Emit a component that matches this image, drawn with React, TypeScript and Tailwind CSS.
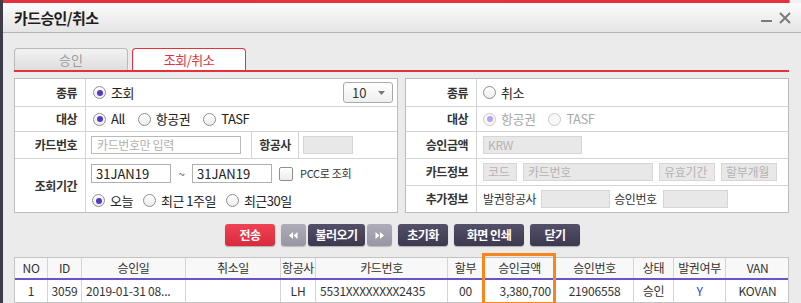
import React from "react";

const FONT = { fontFamily: "'Noto Sans CJK KR', 'Noto Sans', sans-serif" };

function Radio({ checked = false, disabled = false }: { checked?: boolean; disabled?: boolean }) {
  return (
    <span
      className={`inline-flex items-center justify-center w-[13px] h-[13px] rounded-full border ${
        disabled ? "border-[#c9c9c9] bg-[#f7f7f7]" : "border-[#8f8f8f] bg-gradient-to-b from-white to-[#ececec]"
      } shrink-0`}
    >
      {checked && (
        <span className={`w-[6px] h-[6px] rounded-full ${disabled ? "bg-[#b7a3ea]" : "bg-[#5637c9]"}`} />
      )}
    </span>
  );
}

function RadioItem({ label, checked, disabled }: { label: string; checked?: boolean; disabled?: boolean }) {
  return (
    <span className="inline-flex items-center gap-[5px]">
      <Radio checked={checked} disabled={disabled} />
      <span className={`text-[13px] tracking-[-0.5px] ${disabled ? "text-[#a9a9a9]" : "text-[#222]"}`}>{label}</span>
    </span>
  );
}

function Label({ children, w = "w-[71px]" }: { children: React.ReactNode; w?: string }) {
  return (
    <div className={`${w} shrink-0 border-r border-[#d4d4d4] flex items-center justify-end pr-[8px] text-[12px] font-bold text-[#333] tracking-[-0.5px]`}>
      {children}
    </div>
  );
}

function DisBox({ w, text }: { w: string; text?: string }) {
  return (
    <div className={`${w} h-[18px] border border-[#d6d6d6] bg-[#e8e8e8] flex items-center px-[4px] text-[12px] text-[#b3b3b3] tracking-[-0.3px]`}>
      {text}
    </div>
  );
}

function DarkBtn({ children, w }: { children: React.ReactNode; w: string }) {
  return (
    <button className={`${w} h-[22px] rounded-[3px] bg-gradient-to-b from-[#55506a] to-[#3d3850] text-white text-[12px] font-bold tracking-[-0.5px] flex items-center justify-center shadow-[0_1px_1px_rgba(0,0,0,0.25)]`}>
      {children}
    </button>
  );
}

function ArrowBtn({ dir }: { dir: "l" | "r" }) {
  return (
    <button className="w-[25px] h-[22px] rounded-[3px] bg-gradient-to-b from-[#aeacb8] to-[#9896a4] flex items-center justify-center shadow-[0_1px_1px_rgba(0,0,0,0.2)]">
      <svg width="9" height="7" viewBox="0 0 9 7">
        {dir === "l" ? (
          <g fill="#fff">
            <polygon points="4,0 4,7 0,3.5" />
            <polygon points="8.5,0 8.5,7 4.5,3.5" />
          </g>
        ) : (
          <g fill="#fff">
            <polygon points="0.5,0 0.5,7 4.5,3.5" />
            <polygon points="5,0 5,7 9,3.5" />
          </g>
        )}
      </svg>
    </button>
  );
}

const cols = [
  { h: "NO", w: 33, v: "1", a: "center" },
  { h: "ID", w: 34, v: "3059", a: "center" },
  { h: "승인일", w: 104, v: "2019-01-31 08...", a: "left" },
  { h: "취소일", w: 95, v: "", a: "left" },
  { h: "항공사", w: 35, v: "LH", a: "center" },
  { h: "카드번호", w: 132, v: "5531XXXXXXXX2435", a: "left" },
  { h: "할부", w: 36, v: "00", a: "center" },
  { h: "승인금액", w: 72, v: "3,380,700", a: "right" },
  { h: "승인번호", w: 78, v: "21906558", a: "center" },
  { h: "상태", w: 40, v: "승인", a: "center" },
  { h: "발권여부", w: 52, v: "Y", a: "center" },
  { h: "VAN", w: 63, v: "KOVAN", a: "center" },
];

export default function App() {
  return (
    <div style={FONT} className="w-[801px] h-[303px] overflow-hidden flex bg-[#ebebeb] text-[#222]">
      <div className="w-[3px] shrink-0 bg-[#3e3c4b]" />
      <div className="flex-1 flex flex-col min-w-0">
        {/* top red line */}
        <div className="h-[3px] flex">
          <div className="w-[786px] bg-[#e3313d]" />
          <div className="w-[1px] bg-[#9a9a9a]" />
          <div className="flex-1 bg-[#f0f0f0]" />
        </div>
        {/* title bar */}
        <div className="h-[30px] shrink-0 bg-gradient-to-b from-[#fbfbfb] to-[#e5e5e5] border-b border-[#b3b3b3] flex items-center pl-[11px] pr-[10px]">
          <div className="text-[15px] font-bold text-[#1e1e1e] tracking-[-0.6px] leading-none">카드승인/취소</div>
          <div className="ml-auto flex items-center gap-[7px] mt-[1px]">
            <svg width="11" height="12" viewBox="0 0 11 12">
              <rect x="0" y="8" width="11" height="2" fill="#7b7b7b" />
            </svg>
            <svg width="12" height="12" viewBox="0 0 12 12">
              <path d="M1 1 L11 11 M11 1 L1 11" stroke="#7b7b7b" strokeWidth="2" />
            </svg>
          </div>
        </div>

        {/* body */}
        <div className="pl-[11px] pr-[12px] pt-[15px]">
          {/* tabs */}
          <div className="flex gap-[4px] h-[22px] items-end">
            <div className="w-[114px] h-[22px] rounded-t-[4px] border border-b-0 border-[#b9b9b9] bg-gradient-to-b from-[#f2f2f2] to-[#dedede] flex items-center justify-center text-[13px] text-[#9d9d9d]">
              승인
            </div>
            <div className="w-[114px] h-[22px] rounded-t-[4px] border border-b-0 border-[#e3313d] bg-white flex items-center justify-center text-[13px] text-[#e3313d] tracking-[-0.5px]">
              조회/취소
            </div>
          </div>
          <div className="h-[2px] bg-[#e3313d]" />

          {/* panels */}
          <div className="mt-[6px] flex gap-[7px]">
            {/* left panel */}
            <div className="w-[384px] h-[135px] border border-[#bcbcbc] bg-white flex flex-col">
              <div className="h-[28px] flex border-b border-[#d4d4d4]">
                <Label>종류</Label>
                <div className="flex-1 flex items-center pl-[7px] pr-[4px]">
                  <RadioItem label="조회" checked />
                  <div className="ml-auto w-[50px] h-[21px] rounded-[3px] border border-[#a9a9a9] bg-gradient-to-b from-white to-[#efefef] flex items-center pl-[8px] pr-[7px] text-[13px] text-[#333]">
                    10
                    <svg className="ml-auto" width="7" height="4" viewBox="0 0 7 4">
                      <polygon points="0,0 7,0 3.5,4" fill="#777" />
                    </svg>
                  </div>
                </div>
              </div>
              <div className="h-[25px] flex border-b border-[#d4d4d4]">
                <Label>대상</Label>
                <div className="flex-1 flex items-center pl-[7px] gap-[13px]">
                  <RadioItem label="All" checked />
                  <RadioItem label="항공권" />
                  <RadioItem label="TASF" />
                </div>
              </div>
              <div className="h-[27px] flex border-b border-[#d4d4d4]">
                <Label>카드번호</Label>
                <div className="w-[166px] border-r border-[#d4d4d4] flex items-center pl-[5px]">
                  <div className="w-[150px] h-[18px] border border-[#b9b9b9] bg-white flex items-center px-[5px] text-[12px] text-[#b0b0b0] tracking-[-0.4px]">
                    카드번호만 입력
                  </div>
                </div>
                <div className="w-[47px] border-r border-[#d4d4d4] flex items-center justify-center text-[12px] font-bold text-[#333] tracking-[-0.5px]">
                  항공사
                </div>
                <div className="flex-1 flex items-center pl-[4px]">
                  <div className="w-[50px] h-[18px] border border-[#d6d6d6] bg-[#e8e8e8]" />
                </div>
              </div>
              <div className="flex-1 flex">
                <Label>조회기간</Label>
                <div className="flex-1 flex flex-col pl-[5px] pt-[5px]">
                  <div className="flex items-center h-[19px]">
                    <div className="w-[80px] h-[19px] border border-[#b0b0b0] bg-white flex items-center px-[4px] text-[13px] text-[#222]">31JAN19</div>
                    <span className="w-[21px] text-center text-[12px] text-[#555]">~</span>
                    <div className="w-[80px] h-[19px] border border-[#b0b0b0] bg-white flex items-center px-[4px] text-[13px] text-[#222]">31JAN19</div>
                    <span className="ml-[7px] w-[14px] h-[14px] rounded-[2px] border border-[#8f8f8f] bg-gradient-to-b from-white to-[#ececec]" />
                    <span className="ml-[7px] text-[11px] text-[#333] tracking-[-0.3px]">PCC로 조회</span>
                  </div>
                  <div className="flex items-center gap-[10px] mt-[8px] pl-[1px]">
                    <RadioItem label="오늘" checked />
                    <RadioItem label="최근 1주일" />
                    <RadioItem label="최근30일" />
                  </div>
                </div>
              </div>
            </div>

            {/* right panel */}
            <div className="w-[384px] h-[135px] border border-[#bcbcbc] bg-white flex flex-col">
              <div className="h-[28px] flex border-b border-[#d4d4d4]">
                <Label>종류</Label>
                <div className="flex-1 flex items-center pl-[6px]">
                  <RadioItem label="취소" />
                </div>
              </div>
              <div className="h-[25px] flex border-b border-[#d4d4d4]">
                <Label>대상</Label>
                <div className="flex-1 flex items-center pl-[6px] gap-[13px]">
                  <RadioItem label="항공권" checked disabled />
                  <RadioItem label="TASF" disabled />
                </div>
              </div>
              <div className="h-[27px] flex border-b border-[#d4d4d4]">
                <Label>승인금액</Label>
                <div className="flex-1 flex items-center pl-[6px]">
                  <DisBox w="w-[99px]" text="KRW" />
                </div>
              </div>
              <div className="h-[27px] flex border-b border-[#d4d4d4]">
                <Label>카드정보</Label>
                <div className="flex-1 flex items-center pl-[6px] gap-[6px]">
                  <DisBox w="w-[34px]" text="코드" />
                  <DisBox w="w-[130px]" text="카드번호" />
                  <DisBox w="w-[56px]" text="유효기간" />
                  <DisBox w="w-[56px]" text="할부개월" />
                </div>
              </div>
              <div className="flex-1 flex">
                <Label>추가정보</Label>
                <div className="flex-1 flex items-center pl-[6px] text-[12px] text-[#333] tracking-[-0.4px]">
                  <span>발권항공사</span>
                  <div className="ml-[5px] w-[69px] h-[18px] border border-[#d6d6d6] bg-[#e8e8e8]" />
                  <span className="ml-[4px]">승인번호</span>
                  <div className="ml-[6px] w-[65px] h-[18px] border border-[#d6d6d6] bg-[#e8e8e8]" />
                </div>
              </div>
            </div>
          </div>

          {/* buttons */}
          <div className="mt-[11px] flex items-center pl-[211px]">
            <button className="w-[50px] h-[22px] rounded-[3px] bg-gradient-to-b from-[#ef4355] to-[#d82a3c] text-white text-[12px] font-bold tracking-[-0.5px] flex items-center justify-center shadow-[0_1px_1px_rgba(0,0,0,0.25)]">
              전송
            </button>
            <div className="ml-[6px] flex gap-[2px]">
              <ArrowBtn dir="l" />
              <DarkBtn w="w-[57px]">불러오기</DarkBtn>
              <ArrowBtn dir="r" />
            </div>
            <div className="ml-[6px]">
              <DarkBtn w="w-[50px]">초기화</DarkBtn>
            </div>
            <div className="ml-[6px]">
              <DarkBtn w="w-[70px]">화면 인쇄</DarkBtn>
            </div>
            <div className="ml-[6px]">
              <DarkBtn w="w-[50px]">닫기</DarkBtn>
            </div>
          </div>

          {/* table */}
          <div className="mt-[11px] relative w-[775px]">
            <div className="border border-[#c3c3c3] bg-white">
              <div className="flex h-[22px] bg-[#f8f8f8] border-b-2 border-[#6c54c4]">
                {cols.map((c, i) => (
                  <div
                    key={c.h}
                    style={{ width: c.w }}
                    className={`shrink-0 flex items-center justify-center text-[12px] text-[#333] tracking-[-0.4px] ${
                      i < cols.length - 1 ? "border-r border-[#d4d4d4]" : ""
                    }`}
                  >
                    {c.h}
                  </div>
                ))}
              </div>
              <div className="flex h-[22px]">
                {cols.map((c, i) => (
                  <div
                    key={c.h}
                    style={{ width: c.w }}
                    className={`shrink-0 flex items-center text-[12px] tracking-[-0.2px] px-[4px] ${
                      c.a === "center" ? "justify-center" : c.a === "right" ? "justify-end" : "justify-start"
                    } ${c.h === "발권여부" ? "text-[#2b3ee0]" : "text-[#333]"} ${
                      i < cols.length - 1 ? "border-r border-[#d4d4d4]" : ""
                    }`}
                  >
                    {c.v}
                  </div>
                ))}
              </div>
            </div>
            <div className="absolute left-[468px] top-[-4px] w-[74px] h-[52px] border-[3px] border-[#f7861f]" />
          </div>
        </div>
      </div>
    </div>
  );
}
